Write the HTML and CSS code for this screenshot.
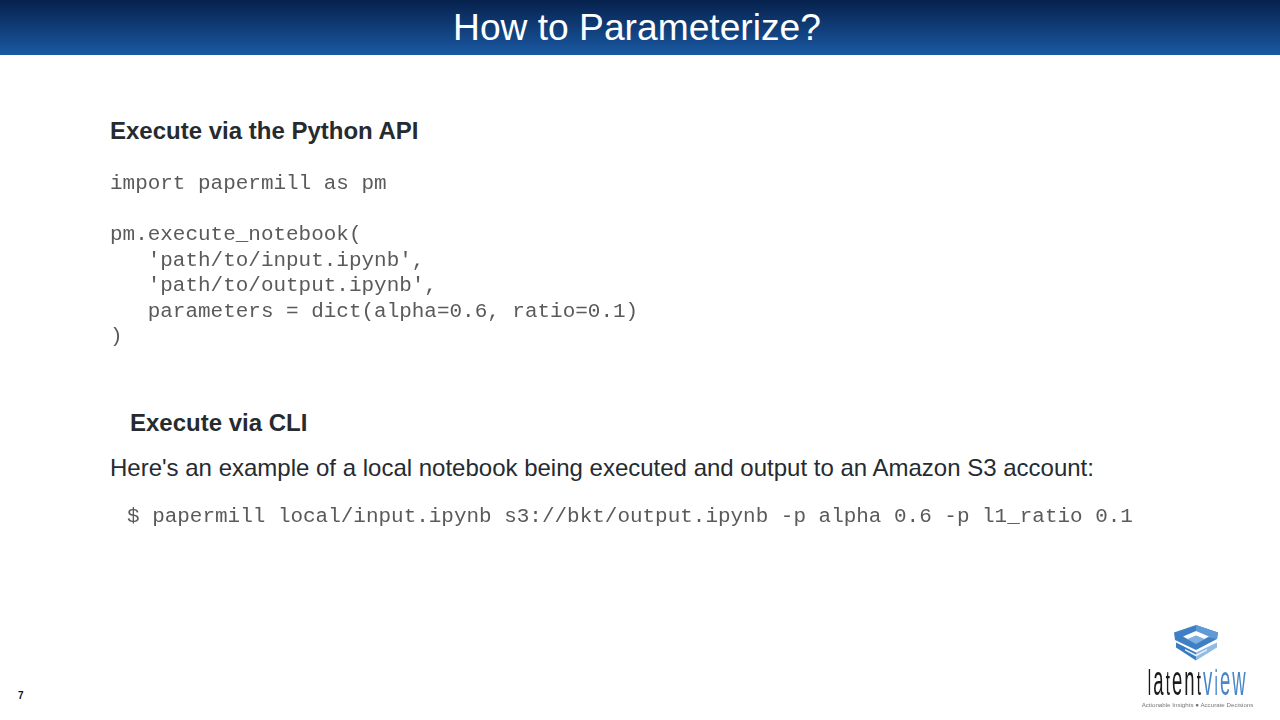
FILE: index.html
```html
<!DOCTYPE html>
<html lang="en">
<head>
<meta charset="utf-8">
<title>How to Parameterize?</title>
<link rel="stylesheet" href="styles.css">
</head>
<body>
<header class="banner"><h1 class="title">How to Parameterize?</h1></header>
<main class="content">
  <h2 class="heading">Execute via the Python API</h2>
  <pre class="code code-api">import papermill as pm

pm.execute_notebook(
   'path/to/input.ipynb',
   'path/to/output.ipynb',
   parameters = dict(alpha=0.6, ratio=0.1)
)</pre>
  <h2 class="heading heading-cli">Execute via CLI</h2>
  <p class="body-text">Here's an example of a local notebook being executed and output to an Amazon S3 account:</p>
  <pre class="code code-cli">$ papermill local/input.ipynb s3://bkt/output.ipynb -p alpha 0.6 -p l1_ratio 0.1</pre>
</main>
<footer class="footer">
  <span class="page-number">7</span>
  <div class="logo">
    <svg class="logo-mark" width="44" height="36" viewBox="0 0 44 36" aria-hidden="true">
      <path d="M22 0 L44 7.5 L43 14 L22 25 L1 15 L0 7.5 Z" fill="#3f80c4"/>
      <path d="M22 0 L44 7.5 L43 14 L33 12 L22 6 Z" fill="#5f9ad6"/>
      <path d="M22 10.5 L31 14 L22 19 L13 14 Z" fill="#7fb0e0"/>
      <path d="M22 6 L9 11.5 L13.5 14 L22 10.5 L30.5 14 L35 11.5 Z" fill="#fff"/>
      <path d="M2 17.5 L22 27.5 L22 35.5 L2 22.5 Z" fill="#3a7cc0"/>
      <path d="M43 17.5 L22 27.5 L22 35.5 L43 22.5 Z" fill="#8fbbe4"/>
      <path d="M11 24 L22 29.5 L33 24 L33 25.5 L22 31.5 L11 25.5 Z" fill="#e4eef8"/>
    </svg>
    <div class="wordmark"><span class="word-dark"><span class="tall">l</span>a<span class="tall">t</span>en<span class="tall">t</span></span><span class="word-blue">v<span class="tall">i</span>ew</span></div>
    <div class="tagline">Actionable Insights ● Accurate Decisions</div>
  </div>
</footer>
</body>
</html>
```
FILE: styles.css
```css
* { box-sizing: border-box; }
html, body { margin: 0; padding: 0; }
body {
  width: 1280px;
  height: 720px;
  background: #fff;
  position: relative;
  overflow: hidden;
  font-family: "Liberation Sans", Arial, sans-serif;
  color: #262b30;
}
.banner {
  height: 55px;
  background: linear-gradient(180deg, #06214c 0%, #1a59a3 100%);
  display: flex;
  justify-content: center;
  align-items: center;
  padding-top: 1px;
  padding-right: 6px;
}
.title {
  margin: 0;
  color: #fff;
  font-size: 37.2px;
  font-weight: 400;
  line-height: 1;
}
.content {
  padding: 61px 0 0 110px;
}
.heading {
  margin: 0;
  font-size: 24px;
  line-height: 30px;
  font-weight: 700;
}
.heading-cli { margin: 58px 0 0 20px; }
.code {
  margin: 0;
  font-family: "Liberation Mono", "Courier New", monospace;
  font-size: 20.96px;
  line-height: 25.5px;
  color: #5a5a5a;
  filter: blur(0.25px);
}
.code-api { margin-top: 25px; }
.body-text {
  margin: 15px 0 0;
  font-size: 24px;
  line-height: 30px;
}
.code-cli { margin: 21px 0 0 17px; }
.footer {
  position: absolute;
  left: 0;
  right: 0;
  bottom: 0;
  height: 100px;
}
.page-number {
  position: absolute;
  left: 18px;
  bottom: 19px;
  font-size: 10px;
  font-weight: 700;
  color: #111;
}
.logo {
  position: absolute;
  right: 26px;
  bottom: 11px;
  width: 113px;
  display: flex;
  flex-direction: column;
  align-items: center;
}
.logo-mark {
  display: block;
  margin-right: 3px;
  filter: blur(0.4px);
}
.wordmark {
  height: 39px;
  font-size: 28px;
  line-height: 39px;
  letter-spacing: 3.2px;
  transform: scale(0.66, 1.5);
  white-space: nowrap;
  filter: blur(0.3px);
}
.tall { font-size: 23px; }
.word-dark { color: #1a1a1a; }
.word-blue { color: #4a86c5; }
.tagline {
  font-size: 6.2px;
  line-height: 9px;
  color: #777;
  white-space: nowrap;
  filter: blur(0.3px);
}
```
